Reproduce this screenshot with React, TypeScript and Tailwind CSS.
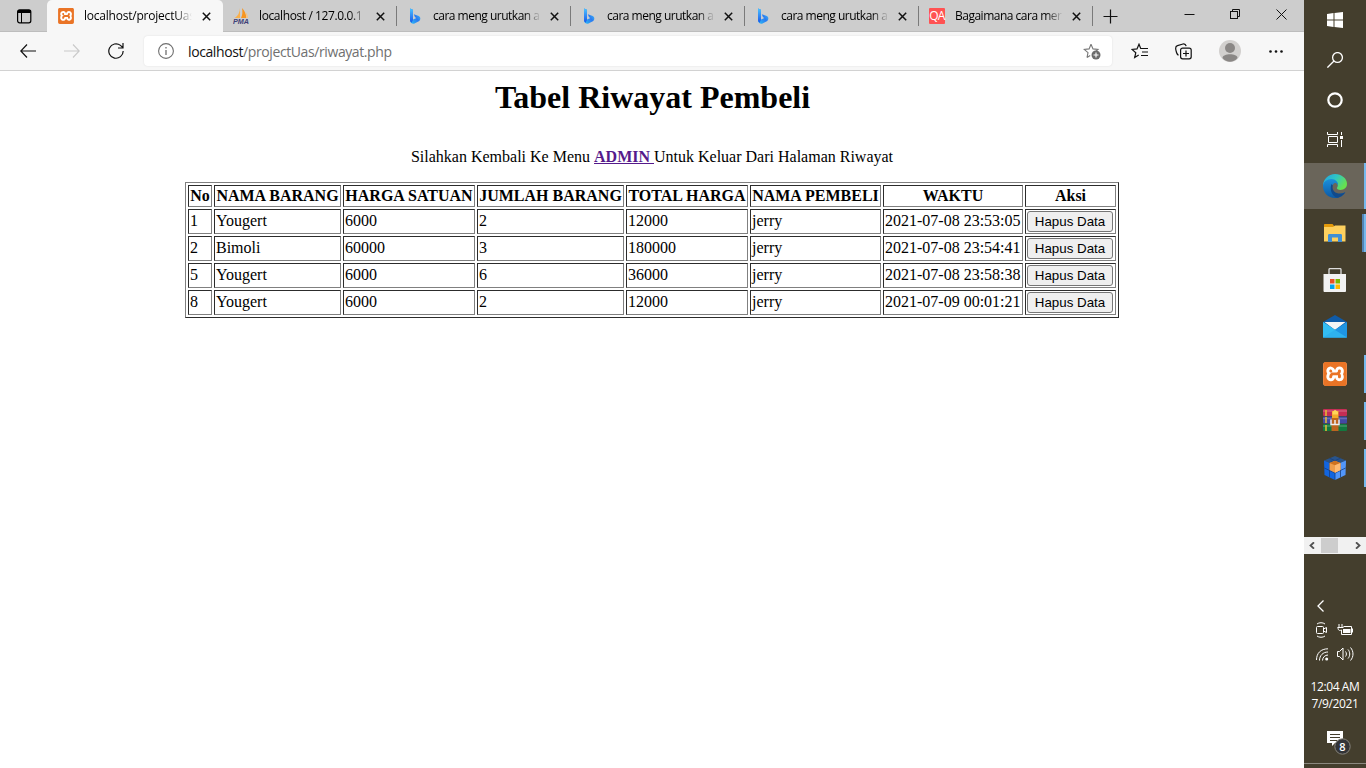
import type { ReactNode } from "react";
import { SiXampp } from "react-icons/si";

const rows = [
  ["1", "Yougert", "6000", "2", "12000", "jerry", "2021-07-08 23:53:05"],
  ["2", "Bimoli", "60000", "3", "180000", "jerry", "2021-07-08 23:54:41"],
  ["5", "Yougert", "6000", "6", "36000", "jerry", "2021-07-08 23:58:38"],
  ["8", "Yougert", "6000", "2", "12000", "jerry", "2021-07-09 00:01:21"],
];

const headers = [
  ["No", "w-[24px]"],
  ["NAMA BARANG", "w-[127px]"],
  ["HARGA SATUAN", "w-[132px]"],
  ["JUMLAH BARANG", "w-[147px]"],
  ["TOTAL HARGA", "w-[122px]"],
  ["NAMA PEMBELI", "w-[131px]"],
  ["WAKTU", "w-[140px]"],
  ["Aksi", "w-[91px]"],
];

const Xampp = ({ large }: { large?: boolean }) => (
  <span className={`flex bg-white ${large ? "size-6 rounded-[4px]" : "size-4 rounded-[3px]"}`}>
    <SiXampp className={`text-[#ea7426] ${large ? "size-6" : "size-4"}`} />
  </span>
);

const Pma = () => (
  <svg className="size-4" viewBox="0 0 16 16">
    <path d="M7 0v10H1.500C5 8 6.500 5 7 0Z" fill="#f9b04c" />
    <path d="M9 0c3 3 4 6 4.300 10H8C9.500 7 9.700 4 9 0Z" fill="#f79520" />
    <path d="M12.500 4c2 2 2.500 4 2.500 6h-1.500c0-2-.3-4-1-6Z" fill="#fac37a" />
    <text x="0" y="15.500" fontFamily="Liberation Sans" fontWeight="bold" fontStyle="italic" fontSize="6.500" textLength="16" lengthAdjust="spacingAndGlyphs" fill="#3f3f78">
      PMA
    </text>
  </svg>
);

const Bing = () => (
  <svg className="size-4" viewBox="0 0 16 16">
    <defs>
      <linearGradient id="bingStem" x1="0" y1="0" x2="0" y2="1">
        <stop stopColor="#4cc3ff" />
        <stop offset="1" stopColor="#1b55e8" />
      </linearGradient>
      <linearGradient id="bingBowl" x1="0" y1="1" x2="1" y2="0">
        <stop stopColor="#2fc3f7" />
        <stop offset=".5" stopColor="#2a7af0" />
        <stop offset="1" stopColor="#4fe0f5" />
      </linearGradient>
    </defs>
    <path d="M3 .5l3 1.200v9.800L9.500 10 8 9.300 6.800 6.200l5 1.900c2 1 2 3.500.500 4.800L7 15.800C4.500 16 3 14.500 3 12Z" fill="url(#bingBowl)" />
    <path d="M3 .5l3 1.200V12l-1.500 2.700C3.400 14 3 13 3 12Z" fill="url(#bingStem)" />
  </svg>
);

const Qa = () => (
  <span className="flex size-4 items-center justify-center rounded-[1px] bg-[#ff5252] text-[12px] leading-none tracking-[-0.8px] text-white">
    QA
  </span>
);

const Cross = () => (
  <svg className="size-[9px] shrink-0" viewBox="0 0 9 9" stroke="#111" strokeWidth="1.500">
    <path d="M.8.8l7.400 7.400M8.200.8L.8 8.200" />
  </svg>
);

const labelClass =
  "w-[108px] shrink-0 overflow-hidden text-[12px] whitespace-nowrap [mask-image:linear-gradient(to_right,black_84%,transparent)]";

function Tab({ icon, label, tight }: { icon: ReactNode; label: string; tight?: boolean }) {
  return (
    <div className="flex h-8 w-[174px] shrink-0 items-center pl-[10px]">
      <span className="w-[26px] shrink-0">{icon}</span>
      <span className={`${labelClass} ${tight ? "tracking-[-0.5px]" : "tracking-[-0.4px]"}`}>{label}</span>
      <span className="mt-[1px] w-[29px] pl-[9px]">
        <Cross />
      </span>
      <span className="h-5 w-px bg-[#7a7a7a]" />
    </div>
  );
}

function TabStrip() {
  return (
    <div className="flex h-8 items-center bg-[#cdcdcd] text-black shadow-[inset_0_-1px_#bdbdbd]">
      <div className="w-[47px] pl-[17px]">
        <svg className="h-[15px] w-[15px]" viewBox="0 0 15 15" fill="none" stroke="#000">
          <rect x=".6" y=".8" width="13.200" height="13" rx="2" strokeWidth="1.200" />
          <path d="M1 2.500h13" strokeWidth="3" />
          <path d="M4.500 3v11" />
        </svg>
      </div>
      <div className="flex h-8 w-[176px] shrink-0 items-center rounded-t-[5px] bg-[#f7f7f7] pl-[11px]">
        <span className="w-[26px]">
          <Xampp />
        </span>
        <span className={`${labelClass} tracking-[-0.22px]`}>localhost/projectUas</span>
        <span className="mt-[1px] ml-[10px]">
          <Cross />
        </span>
      </div>
      <Tab icon={<Pma />} label="localhost / 127.0.0.1" />
      <Tab icon={<Bing />} label="cara meng urutkan a" tight />
      <Tab icon={<Bing />} label="cara meng urutkan a" tight />
      <Tab icon={<Bing />} label="cara meng urutkan a" tight />
      <Tab icon={<Qa />} label="Bagaimana cara mer" tight />
      <div className="flex flex-1 items-center pl-[10px]">
        <svg className="size-[15px]" viewBox="0 0 15 15" stroke="#111" strokeWidth="1.200">
          <path d="M7.500.5v14M.5 7.500h14" />
        </svg>
        <svg className="ml-[66px] mt-[-3px] h-[11px] w-[11px]" viewBox="0 0 11 11" stroke="#111">
          <path d="M.5 5.500h10" />
        </svg>
        <svg className="ml-[35px] mt-[-3px] size-[11px]" viewBox="0 0 11 11" fill="none" stroke="#111">
          <rect x=".5" y="2.500" width="7" height="7" />
          <path d="M2.500 2.500v-2h7v7h-2" />
        </svg>
        <svg className="ml-[35px] mt-[-3px] size-[11px]" viewBox="0 0 11 11" stroke="#111">
          <path d="M.5.5l10 10M10.500.5l-10 10" />
        </svg>
      </div>
    </div>
  );
}

const star = "M8 1.200l2 4.700 5 .5-3.800 3.300M4 14.500l1-4.800L1.200 6.400l4.900-.5L8 1.200M4 14.500l3.200-2";

function Toolbar() {
  return (
    <div className="flex h-[39px] items-center border-b border-b-[#d2d2d2] bg-[#f7f7f7]">
      <div className="flex w-[144px] items-center pl-5">
        <svg className="h-[14px] w-4" viewBox="0 0 16 14" fill="none" stroke="#111" strokeWidth="1.200">
          <path d="M7 .5L.8 7 7 13.500M.8 7H16" />
        </svg>
        <svg className="ml-7 h-[14px] w-4" viewBox="0 0 16 14" fill="none" stroke="#c9c9c9" strokeWidth="1.100">
          <path d="M9 .5L15.200 7 9 13.500M15.200 7H0" />
        </svg>
        <svg className="ml-7 size-4" viewBox="0 0 16 16" fill="none" stroke="#111" strokeWidth="1.200">
          <path d="M15.200 8A7.200 7.200 0 1 1 12.500 2.400L14.800 4.700M15 0v5H10" />
        </svg>
      </div>
      <div className="flex h-[30px] w-[968px] items-center rounded-[4px] bg-white pr-[11px] pl-[14px] shadow-[0_0_2px_#ddd]">
        <svg className="size-4" viewBox="0 0 16 16" fill="none" stroke="#6f6f6f" strokeWidth="1.100">
          <circle cx="8" cy="8" r="7.400" />
          <path d="M8 7v5M8 4v1.400" strokeWidth="1.300" />
        </svg>
        <span className="ml-[14px] flex-1 text-[14px] tracking-[-0.4px] text-[#707070]">
          <span className="text-[#111]">localhost</span>/projectUas/riwayat.php
        </span>
        <svg className="h-[17px] w-[18px]" viewBox="0 0 18 17" fill="none" stroke="#777" strokeWidth="1.100">
          <path d={star} />
          <circle cx="13" cy="12" r="4.500" fill="#6b6b6b" stroke="none" />
          <path d="M13 9.500v5M10.500 12h5" stroke="#fff" />
        </svg>
      </div>
      <svg className="ml-[19px] h-4 w-[17px]" viewBox="0 0 17 16" fill="none" stroke="#111" strokeWidth="1.200">
        <path d="M10 5.500h-.3L8 1.200 6 5.900l-5 .5 3.800 3.300-1.100 4.900 4-2.500M9.500 5.500H17M11 9h6M10 12.500h7" />
      </svg>
      <svg className="ml-[27px] size-[17px]" viewBox="0 0 17 17" fill="none" stroke="#111" strokeWidth="1.200">
        <path d="M3.500 12.200C1.700 11.500 1.500 10 1 7.500.2 4.500.3 3.200 2.500 2.600L8 1c1.800-.4 2.700.4 3.200 2.200" />
        <rect x="5.600" y="5.200" width="10.600" height="10.600" rx="2" />
        <path d="M11 7.500v6M8 10.500h6" />
      </svg>
      <svg className="ml-[27px] size-[22px]" viewBox="0 0 22 22">
        <circle cx="11" cy="11" r="11" fill="#d2d0ce" />
        <circle cx="11" cy="8" r="5" fill="#8a8785" />
        <path d="M3.500 18c0-5 15-5 15 0-4 5-11 5-15 0Z" fill="#8a8785" />
      </svg>
      <svg className="ml-[28px] h-[3px] w-[14px]" viewBox="0 0 14 3" fill="#111">
        <circle cx="1.500" cy="1.500" r="1.300" />
        <circle cx="7" cy="1.500" r="1.300" />
        <circle cx="12.500" cy="1.500" r="1.300" />
      </svg>
    </div>
  );
}

function Page() {
  return (
    <main className="flex flex-1 flex-col items-center bg-white font-['Liberation_Serif',serif] text-[16px] leading-[18px] text-black">
      <h1 className="mt-[8px] pl-px text-[32px] leading-[37px] font-bold">Tabel Riwayat Pembeli</h1>
      <p className="mt-[32px] whitespace-pre">
        Silahkan Kembali Ke Menu{" "}
        <a className="font-bold text-[#551a8b] underline">ADMIN </a>
        Untuk Keluar Dari Halaman Riwayat
      </p>
      <table className="mt-[16px] w-[934px] table-fixed border-separate border-spacing-[2px] border border-t-[#808080] border-r-[#2c2c2c] border-b-[#2c2c2c] border-l-[#808080]">
        <thead>
          <tr className="h-[22px]">
            {headers.map(([h, w]) => (
              <th key={h} className={`${w} border border-t-[#2c2c2c] border-r-[#808080] border-b-[#808080] border-l-[#2c2c2c] p-px font-bold whitespace-nowrap`}>
                {h}
              </th>
            ))}
          </tr>
        </thead>
        <tbody>
          {rows.map((r) => (
            <tr key={r[0]} className="h-[25px]">
              {r.map((c, i) => (
                <td key={i} className="border border-t-[#2c2c2c] border-r-[#808080] border-b-[#808080] border-l-[#2c2c2c] px-px pt-px pb-[3px] whitespace-nowrap">
                  {c}
                </td>
              ))}
              <td className="border border-t-[#2c2c2c] border-r-[#808080] border-b-[#808080] border-l-[#2c2c2c] p-px">
                <button className="block h-[21px] w-[86px] rounded-[3px] border border-[#767676] bg-[#efefef] font-['Liberation_Sans',sans-serif] text-[13.333px] leading-[19px] whitespace-nowrap">
                  Hapus Data
                </button>
              </td>
            </tr>
          ))}
        </tbody>
      </table>
    </main>
  );
}

function AppSlot({ children, bar, double }: { children: ReactNode; bar?: boolean; double?: boolean }) {
  return (
    <div className="flex h-[47px] items-start">
      <div className="flex h-12 w-[58px] items-center justify-center pl-[4px]">{children}</div>
      <div className={`${double ? "bg-[#5384b4]" : ""} mt-[5px] h-[38px] w-[2px]`} />
      <div className={`${bar || double ? "bg-[#76b9ed]" : ""} mt-[5px] h-[38px] w-[2px]`} />
    </div>
  );
}

const EdgeIcon = () => (
  <svg className="size-6" viewBox="0 0 24 24">
    <defs>
      <linearGradient id="edgeTop" x1="0" y1="0" x2="1" y2=".5">
        <stop stopColor="#249fe0" />
        <stop offset=".5" stopColor="#2ec5c7" />
        <stop offset="1" stopColor="#66e04f" />
      </linearGradient>
      <linearGradient id="edgeBase" x1="0" y1="0" x2="0" y2="1">
        <stop stopColor="#1b8fdc" />
        <stop offset="1" stopColor="#0c59a4" />
      </linearGradient>
    </defs>
    <path d="M0 12C0 5 5.500 0 12 0s12 4.500 12 9.800c0 4-3 6.200-6.500 6.200-2.500 0-4-1-3.500-2.200 2-2.300.500-6.300-4-6.300C5.500 7.500 2 9 0 12Z" fill="url(#edgeTop)" />
    <path d="M0 12c0-4 4-7 8.500-7 4 0 7 3 6.500 6.500C14.500 9.500 12.500 8.500 11 9.500c-5 3.500-2 10 4 10.500 3 .2 5.500-1 7-2C20 22 16 24 12 24 5 24 0 18.500 0 12Z" fill="url(#edgeBase)" />
    <path d="M8.500 10C6.500 15 8.500 21.500 14 23.800 19 23 21.500 20 22.300 18 17 21.500 8 19 9.800 11.500Z" fill="#114a8b" />
  </svg>
);

const FolderIcon = () => (
  <svg className="h-[18px] w-[22px]" viewBox="0 0 22 18">
    <path d="M0 1C0 .4.400 0 1 0h7.500l1.500 1.800V4H0Z" fill="#e39a0b" />
    <path d="M0 3h9l2-1.500h10.500V17.500H0Z" fill="#fdd05f" />
    <path d="M4 18v-6.500C4 10.500 4.500 10 5.500 10h11c1 0 1.500.5 1.500 1.500V18h-4v-4.500H8V18Z" fill="#3f8fd6" />
  </svg>
);

const StoreIcon = () => (
  <svg className="size-6" viewBox="0 0 24 24">
    <path d="M6 8V1.500C6 1 6.500.6 7 .6h10c.5 0 1 .4 1 .9V8" fill="none" stroke="#dcdcdc" strokeWidth="1.300" />
    <path d="M.5 6h22.500v17c0 .5-.5 1-1 1H1.500c-.5 0-1-.5-1-1Z" fill="#f2f2f2" />
    <path d="M7 11h4.500v4.500H7Z" fill="#e94f26" />
    <path d="M12.500 11H17v4.500h-4.500Z" fill="#7db700" />
    <path d="M7 16.500h4.500V21H7Z" fill="#02a3ee" />
    <path d="M12.500 16.500H17V21h-4.500Z" fill="#fdb803" />
  </svg>
);

const MailIcon = () => (
  <svg className="h-[23px] w-6" viewBox="0 0 24 23">
    <path d="M0 7L12 0l12 7v7H0Z" fill="#0f5ba8" />
    <path d="M1.500 7h21L12 15Z" fill="#f5f5f5" />
    <path d="M0 7l24 15.500H0Z" fill="#2bb6f0" />
    <path d="M24 7v15.500H0Z" fill="#1f95e3" />
    <path d="M0 7l12 8 12 7.500H0Z" fill="#37c2f4" opacity=".65" />
  </svg>
);

const RarIcon = () => (
  <svg className="h-[22px] w-6" viewBox="0 0 24 22">
    <rect width="24" height="7" rx="1" fill="#c42d55" />
    <rect y="7.500" width="24" height="7" rx="1" fill="#4348a4" />
    <rect y="15" width="24" height="7" rx="1" fill="#12783f" />
    <path d="M0 2h24M0 9.500h24M0 17h24" stroke="#fff" opacity=".2" strokeWidth="1.500" />
    <path d="M3 1v6M3 8v6M3 16v6" stroke="#e6bd32" strokeWidth="1.500" />
    <path d="M9 2h6.500v8H9Z" fill="#f3ab29" />
    <path d="M9.500 3L12 .8 15 3v2.500H9.500Z" fill="#ffd65b" />
    <path d="M8.500 9h7v13h-7Z" fill="#bd651e" />
    <path d="M8 10.500v5h8v-5M12 11v4" fill="none" stroke="#eee" strokeWidth="1.500" />
  </svg>
);

const CubeIcon = () => (
  <svg className="size-6" viewBox="0 0 24 24">
    <path d="M12 0l11 4.500-11 4.500L1 4.500Z" fill="#29548b" />
    <path d="M1 4.500L12 9v15L1.500 19Z" fill="#1265e0" />
    <path d="M23 4.500L12 9v15l10.500-5Z" fill="#5296fa" />
    <path d="M6.500 2.200L17.500 7v14.500M17.500 2.200L6.500 7v14.500M12 9v15M1.300 12L12 17l10.700-5" fill="none" stroke="#163f82" strokeWidth=".8" />
    <path d="M6.500 7L12 4.700 17.500 7v7L12 16.700 6.500 14Z" fill="#ef9d4b" />
    <path d="M6.500 7L12 4.700 17.500 7 12 9.300Z" fill="#cf721e" />
    <path d="M12 9.300L17.500 7v7L12 16.700Z" fill="#ffba72" />
  </svg>
);

function Taskbar() {
  return (
    <aside className="flex w-[62px] shrink-0 flex-col overflow-hidden bg-[#443e2d] font-['Open_Sans','Noto_Sans',sans-serif] text-white">
      <div className="flex h-10 items-center justify-center">
        <svg className="size-4" viewBox="0 0 16 16" fill="#fff">
          <path d="M0 2l6.500-1v6.500H0ZM7.500 1L16 0v7.500H7.500ZM0 8.500h6.500V15L0 14ZM7.500 8.500H16V16l-8.500-1Z" />
        </svg>
      </div>
      <div className="flex h-10 items-center justify-center">
        <svg className="size-4" viewBox="0 0 16 16" fill="none" stroke="#fff" strokeWidth="1.300">
          <circle cx="10.500" cy="5.500" r="4.900" />
          <path d="M7 9L.4 15.600" />
        </svg>
      </div>
      <div className="flex h-10 items-center justify-center">
        <svg className="size-4" viewBox="0 0 16 16" fill="none" stroke="#fff" strokeWidth="2.200">
          <circle cx="8" cy="8" r="6.700" />
        </svg>
      </div>
      <div className="flex h-[43px] items-start justify-center pt-[12px]">
        <svg className="size-4" viewBox="0 0 16 16" fill="none" stroke="#fff">
          <path d="M.5 0v2.500h10V0M.5 15v-2.500h10V15M1.500 4.500h9v6h-9ZM14.500 0v3M14.500 8v7" />
          <rect x="13" y="4" width="3" height="3" fill="#fff" stroke="none" />
        </svg>
      </div>
      <div className="flex h-[46px] items-center bg-[#6a655a]">
        <div className="flex w-[60px] justify-center pl-[2px]">
          <EdgeIcon />
        </div>
        <div className="h-[46px] w-[2px] bg-[#76b9ed]" />
      </div>
      <AppSlot double><FolderIcon /></AppSlot>
      <AppSlot><StoreIcon /></AppSlot>
      <AppSlot><span className="pb-px"><MailIcon /></span></AppSlot>
      <AppSlot bar><Xampp large /></AppSlot>
      <AppSlot bar><span className="pb-[2px]"><RarIcon /></span></AppSlot>
      <AppSlot bar><CubeIcon /></AppSlot>
      <div className="mt-[46px] flex h-[17px] items-center bg-[#f1f1f1]">
        <svg className="ml-[5px] h-[7px] w-[6px]" viewBox="0 0 6 7" fill="none" stroke="#505050" strokeWidth="1.800">
          <path d="M5 .3L1.500 3.500 5 6.700" />
        </svg>
        <span className="ml-[6px] h-[15px] w-[17px] bg-[#cdcdcd]" />
        <svg className="ml-[17px] h-[7px] w-[6px]" viewBox="0 0 6 7" fill="none" stroke="#505050" strokeWidth="1.800">
          <path d="M1 .3l3.500 3.200L1 6.700" />
        </svg>
      </div>
      <svg className="mt-[46px] ml-[13px] h-[12px] w-[7px]" viewBox="0 0 7 12" fill="none" stroke="#fff" strokeWidth="1.300">
        <path d="M6.500.5L1 6l5.500 5.500" />
      </svg>
      <div className="mt-[10px] flex h-4 items-center pl-[11px]">
        <svg className="h-4 w-[13px]" viewBox="0 0 13 16" fill="none" stroke="#fff">
          <rect x="1.500" y="4.500" width="7" height="7" rx="1" />
          <path d="M8.500 7l3-1.500v5l-3-1.500M2 2C4 .3 8 .3 10 2M2 14c2 1.700 6 1.700 8 0" />
        </svg>
        <svg className="ml-[9px] h-[12px] w-4" viewBox="0 0 16 12" fill="none" stroke="#fff">
          <path d="M6.500 2.500h8v8h-10V8M2 0v3M5 0v3M.5 3.500h6M1 3.500c0 3 1.500 3.500 3.500 2.500v4M15.500 4.500v4" />
          <path d="M6 5h7.500v4H6Z" fill="#fff" stroke="none" />
        </svg>
      </div>
      <div className="mt-[8px] mb-px flex h-4 items-center pl-[12px]">
        <svg className="h-[13px] w-[13px]" viewBox="0 0 13 13" fill="none" stroke="#fff">
          <path d="M.5 12C.5 5 5 .8 12 .8M3.500 12.500c0-5 3.500-8.500 8.500-8.500M6.500 12.500c0-3 2.500-5.500 5.500-5.500" />
          <circle cx="10.700" cy="11" r="1.500" fill="#fff" stroke="none" />
        </svg>
        <svg className="ml-[8px] h-[14px] w-[17px]" viewBox="0 0 17 14" fill="none" stroke="#fff">
          <path d="M.5 4.500h2L6 1v12L2.500 9.500h-2ZM8.500 4.500c1.200 1.500 1.200 3.500 0 5M11 2.500c2.300 2.500 2.300 6.500 0 9M13.500.5c3.300 3.700 3.300 9.300 0 13" />
        </svg>
      </div>
      <div className="mt-[15px] text-center text-[12px] leading-[17px] tracking-[-0.4px] whitespace-nowrap">
        <div>12:04 AM</div>
        <div>7/9/2021</div>
      </div>
      <div className="mt-[18px] flex pl-[23px]">
        <svg className="h-[25px] w-[24px]" viewBox="0 0 24 25">
          <path d="M0 1h16v12H8l-3 3v-3H0Z" fill="#fff" />
          <path d="M3 4.500h10M3 7.500h10M3 10.500h7" stroke="#443e2d" />
          <circle cx="15.500" cy="16.500" r="7.700" fill="#333437" stroke="#85827a" />
          <text x="15.500" y="20.500" textAnchor="middle" fontSize="11" fontWeight="600" fill="#fff">8</text>
        </svg>
      </div>
      <div className="mt-auto mb-[4px] h-px bg-[#8b887f]" />
    </aside>
  );
}

export default function App() {
  return (
    <div className="flex h-[768px] w-[1366px] overflow-hidden">
      <div className="flex w-[1304px] flex-col font-['Open_Sans','Noto_Sans',sans-serif]">
        <TabStrip />
        <Toolbar />
        <Page />
      </div>
      <Taskbar />
    </div>
  );
}
